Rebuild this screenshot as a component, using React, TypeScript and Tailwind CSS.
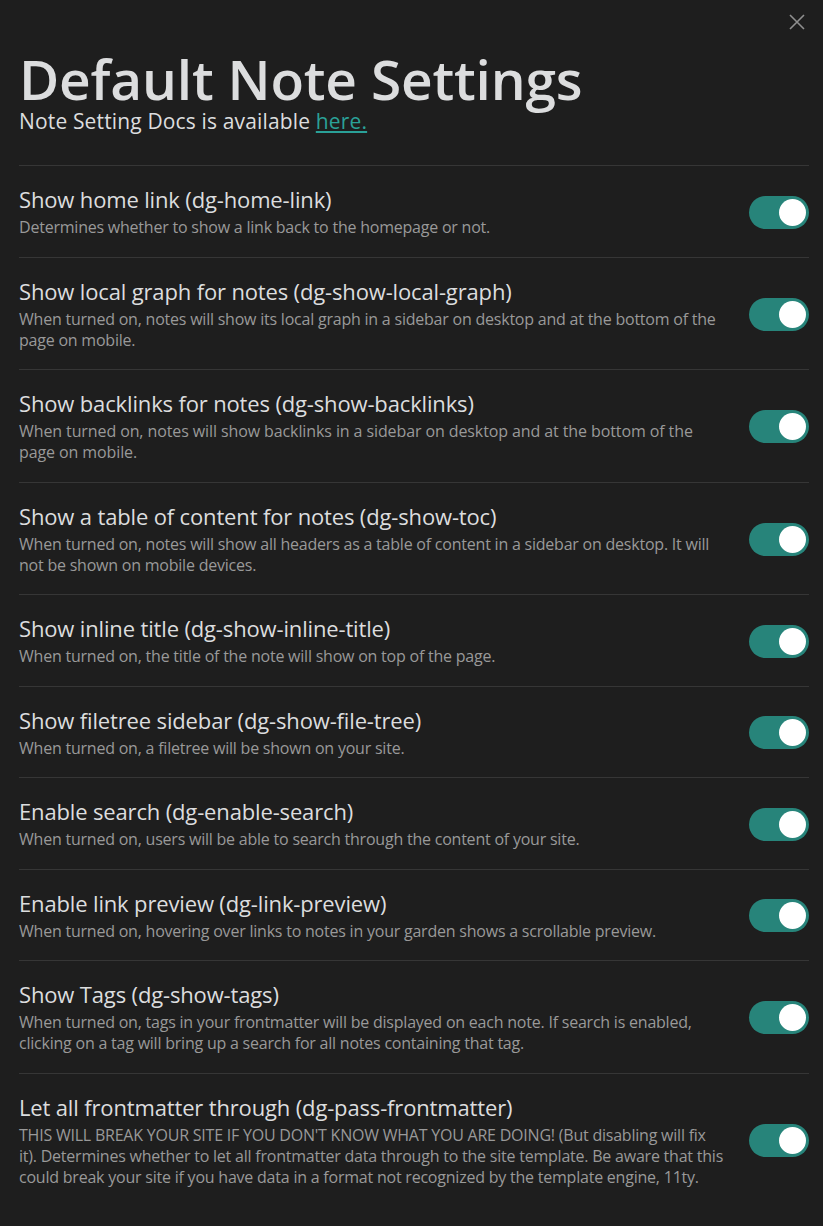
const SETTINGS = [
  {
    name: "Show home link (dg-home-link)",
    desc: "Determines whether to show a link back to the homepage or not.",
  },
  {
    name: "Show local graph for notes (dg-show-local-graph)",
    desc: "When turned on, notes will show its local graph in a sidebar on desktop and at the bottom of the page on mobile.",
  },
  {
    name: "Show backlinks for notes (dg-show-backlinks)",
    desc: "When turned on, notes will show backlinks in a sidebar on desktop and at the bottom of the page on mobile.",
    loose: true,
  },
  {
    name: "Show a table of content for notes (dg-show-toc)",
    desc: "When turned on, notes will show all headers as a table of content in a sidebar on desktop. It will not be shown on mobile devices.",
  },
  {
    name: "Show inline title (dg-show-inline-title)",
    desc: "When turned on, the title of the note will show on top of the page.",
  },
  {
    name: "Show filetree sidebar (dg-show-file-tree)",
    desc: "When turned on, a filetree will be shown on your site.",
  },
  {
    name: "Enable search (dg-enable-search)",
    desc: "When turned on, users will be able to search through the content of your site.",
  },
  {
    name: "Enable link preview (dg-link-preview)",
    desc: "When turned on, hovering over links to notes in your garden shows a scrollable preview.",
  },
  {
    name: "Show Tags (dg-show-tags)",
    desc: "When turned on, tags in your frontmatter will be displayed on each note. If search is enabled, clicking on a tag will bring up a search for all notes containing that tag.",
  },
  {
    name: "Let all frontmatter through (dg-pass-frontmatter)",
    desc: "THIS WILL BREAK YOUR SITE IF YOU DON'T KNOW WHAT YOU ARE DOING! (But disabling will fix it). Determines whether to let all frontmatter data through to the site template. Be aware that this could break your site if you have data in a format not recognized by the template engine, 11ty.",
  },
];

function Toggle() {
  return (
    <div className="flex h-[33px] w-[60px] shrink-0 items-center justify-end rounded-full bg-[#27847a] pr-[3px]">
      <div className="h-[27px] w-[27px] rounded-full bg-white" />
    </div>
  );
}

export default function App() {
  return (
    <div className="relative min-h-[1226px] bg-[#1e1e1e] pb-6 pl-[19px] pr-[14px] pt-[49px] font-['Open_Sans',sans-serif] text-[#dcddde]">
      <button className="absolute right-[17px] top-[13px] text-[#8f8f8f]">
        <svg width="18" height="18" viewBox="0 0 18 18" fill="none" stroke="currentColor" strokeWidth="1.6">
          <path d="M2 2 L16 16 M16 2 L2 16" />
        </svg>
      </button>

      <h1 className="text-[55px] font-semibold leading-[60px] tracking-[-0.2px]">Default Note Settings</h1>
      <p className="text-[21px] leading-[25px] tracking-[0.15px]">
        Note Setting Docs is available{" "}
        <a href="#" className="text-[#2aa198] underline underline-offset-2">
          here.
        </a>
      </p>

      <div className="mt-[31px] border-t border-[#363636]">
        {SETTINGS.map((s) => (
          <div key={s.name} className="flex items-center gap-[22px] border-b border-[#363636] pb-[18.5px] pt-[20px] last:border-b-0">
            <div className="flex-1">
              <div className="text-[22px] leading-[27px] tracking-[-0.15px]">{s.name}</div>
              <div
                className={
                  s.loose
                    ? "mt-[4px] text-[16px] leading-[21px] tracking-[-0.1px] text-[#999999]"
                    : "mt-[4px] text-[16px] leading-[21px] tracking-[-0.22px] text-[#999999]"
                }
              >
                {s.desc}
              </div>
            </div>
            <Toggle />
          </div>
        ))}
      </div>
    </div>
  );
}
